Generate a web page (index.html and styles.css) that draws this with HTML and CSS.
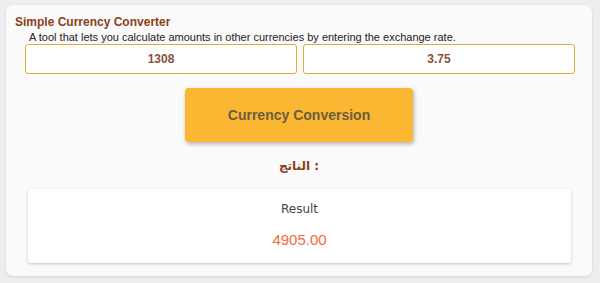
FILE: index.html
```html
<!DOCTYPE html>
<html lang="en">
<head>
<meta charset="utf-8">
<title>Simple Currency Converter</title>
<link rel="stylesheet" href="styles.css">
</head>
<body>
<main class="card">
  <h1 class="title">Simple Currency Converter</h1>
  <p class="desc">A tool that lets you calculate amounts in other currencies by entering the exchange rate.</p>
  <div class="inputs">
    <input class="field" type="text" value="1308">
    <input class="field" type="text" value="3.75">
  </div>
  <div class="action">
    <button class="convert" type="button">Currency Conversion</button>
  </div>
  <p class="output-label">الناتج :</p>
  <section class="result">
    <h2 class="result-title">Result</h2>
    <p class="result-value">4905.00</p>
  </section>
</main>
</body>
</html>
```

FILE: styles.css
```css
* { box-sizing: border-box; }
html, body { margin: 0; padding: 0; }
body {
  width: 600px;
  height: 283px;
  background: #eeeeee;
  font-family: "Comic Sans MS", "DejaVu Sans", sans-serif;
  overflow: hidden;
}
.card {
  margin: 5px 8px 0 6px;
  height: 271px;
  background: #fafafa;
  border-radius: 7px;
  box-shadow: 0 1px 3px rgba(0,0,0,0.12);
  padding: 9px 17px 0 9px;
  display: flex;
  flex-direction: column;
}
.title {
  margin: 0;
  font-family: "Comic Sans MS", "Liberation Sans", sans-serif;
  font-size: 12px;
  font-weight: bold;
  color: #8b3f17;
  line-height: 16px;
}
.desc {
  margin: 1px 0 0 14px;
  font-family: "Comic Sans MS", "Liberation Sans", sans-serif;
  font-size: 11px;
  line-height: 13px;
  height: 13px;
  color: #222222;
  white-space: nowrap;
}
.inputs {
  display: flex;
  gap: 6px;
  margin-left: 10px;
}
.field {
  flex: 1;
  height: 30px;
  border: 1px solid #e3a93c;
  border-radius: 3px;
  background: #ffffff;
  text-align: center;
  font-family: "Liberation Sans", Arial, sans-serif;
  font-weight: bold;
  font-size: 12px;
  color: #8a5040;
  padding: 0;
  min-width: 0;
}
.action {
  display: flex;
  justify-content: center;
  margin-top: 14px;
}
.convert {
  width: 228px;
  height: 54px;
  margin-left: 8px;
  border: none;
  border-radius: 4px;
  background: #fbb632;
  box-shadow: 1px 2px 4px rgba(0,0,0,0.3);
  font-family: "Liberation Sans", Arial, sans-serif;
  font-weight: bold;
  font-size: 14px;
  color: #6b5d40;
}
.output-label {
  margin: 16px 0 0 8px;
  text-align: center;
  font-family: "DejaVu Sans", "Noto Sans", sans-serif;
  font-weight: bold;
  font-size: 12px;
  line-height: 16px;
  color: #8b3f17;
}
.result {
  margin: 15px 4px 0 13px;
  height: 74px;
  background: #ffffff;
  box-shadow: 0 1px 3px rgba(0,0,0,0.22);
  border-radius: 2px;
  display: flex;
  flex-direction: column;
  align-items: center;
}
.result-title {
  margin: 12px 0 0 0;
  font-size: 12px;
  font-weight: normal;
  color: #444444;
  line-height: 16px;
}
.result-value {
  margin: 14px 0 0 0;
  font-family: "Liberation Sans", Arial, sans-serif;
  font-size: 15px;
  color: #f26b3a;
  line-height: 18px;
}
```
